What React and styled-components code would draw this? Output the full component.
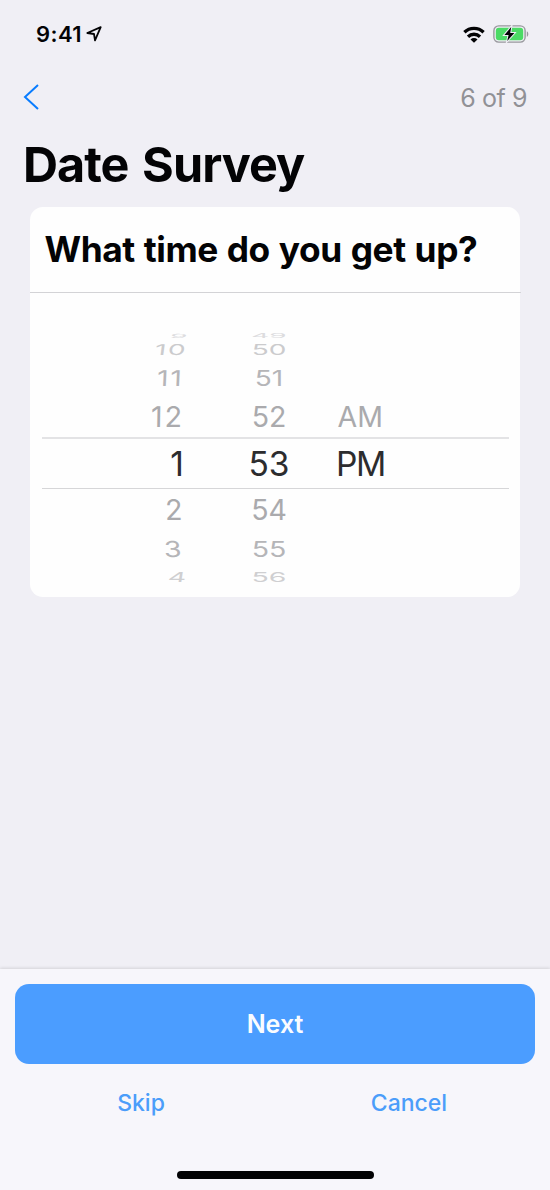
import React from 'react';
import styled, { createGlobalStyle } from 'styled-components';

const GlobalStyle = createGlobalStyle`
  * { box-sizing: border-box; }
  body { margin: 0; background: #f0eff5; }
`;

const Screen = styled.main`
  width: 550px;
  height: 1190px;
  display: flex;
  flex-direction: column;
  background: #f0eff5;
  color: #030305;
  font-family: Inter, 'Liberation Sans', sans-serif;
  overflow: hidden;
`;

const StatusBar = styled.header`
  height: 68px;
  padding: 0 21px 0 36px;
  display: flex;
  align-items: center;
  justify-content: space-between;
`;

const Clock = styled.div`
  display: flex;
  align-items: center;
  gap: 4px;
  font-size: 22px;
  font-weight: 600;
  line-height: 28px;
  letter-spacing: 0.4px;
`;

const Indicators = styled.div`
  display: flex;
  align-items: center;
  gap: 8px;
`;

const Icon = styled.svg`
  display: block;
  flex: none;
`;

const NavBar = styled.nav`
  height: 58px;
  padding: 0 23px 0 23px;
  display: flex;
  align-items: center;
  justify-content: space-between;
`;

const BackButton = styled.button`
  padding: 0;
  border: 0;
  background: none;
`;

const Progress = styled.span`
  padding-top: 2px;
  color: #919196;
  font-size: 25px;
  line-height: 30px;
  letter-spacing: -0.6px;
  word-spacing: 0.5px;
`;

const Title = styled.h1`
  margin: 9px 0 12px;
  padding-left: 23px;
  font-size: 48.5px;
  font-weight: 700;
  line-height: 60px;
  letter-spacing: -0.95px;
  word-spacing: 3px;
  white-space: nowrap;
`;

const Card = styled.section`
  width: 490px;
  height: 390px;
  margin: 0 30px;
  border-radius: 13px;
  background: #fefefe;
`;

const Question = styled.h2`
  width: 491px;
  height: 86px;
  margin: 0;
  padding-left: 14.5px;
  border-bottom: 1px solid #d3d3d6;
  font-size: 35.3px;
  font-weight: 700;
  line-height: 85px;
  letter-spacing: -0.42px;
  word-spacing: 1px;
  white-space: nowrap;
`;

const Wheel = styled.div`
  padding: 38px 11px 0 12px;
`;

const WheelRow = styled.div`
  height: ${(p) => p.$height}px;
  display: grid;
  grid-template-columns: 141px 19px 134px 1fr;
  align-items: center;
  color: ${(p) => p.$color};
  font-size: ${(p) => p.$size}px;
  line-height: 0;
  ${(p) => p.$selected && `
    border-top: 2px solid #e3e3e5;
    border-bottom: 1px solid #d6d6d8;
  `}
`;

const Cell = styled.span`
  justify-self: ${(p) => p.$align};
  white-space: nowrap;
  letter-spacing: ${(p) => p.$spacing || 0}px;
  margin-right: ${(p) => p.$inset || 0}px;
  transform: scaleY(${(p) => p.$squash}) skewX(${(p) => p.$lean || 0}deg);
`;

const Minute = styled(Cell)`
  grid-column: 3;
  width: 134px;
  text-align: center;
`;

const Period = styled(Cell)`
  grid-column: 4;
  width: 76px;
  padding-left: ${(p) => p.$indent}px;
  text-align: left;
`;

const Footer = styled.footer`
  height: 221px;
  margin-top: auto;
  padding: 15px 15px 0;
  display: flex;
  flex-direction: column;
  align-items: center;
  background: #f7f6fb;
  box-shadow: 0 -1px 3px rgba(0, 0, 0, 0.12);
`;

const NextButton = styled.button`
  width: 520px;
  height: 80px;
  border: 0;
  border-radius: 14px;
  background: #4b9dff;
  color: #fafcff;
  font-family: inherit;
  font-size: 25px;
  font-weight: 600;
  line-height: 80px;
  padding: 0;
`;

const Actions = styled.div`
  width: 536px;
  height: 78px;
  display: grid;
  grid-template-columns: 1fr 1fr;
`;

const TextButton = styled.button`
  border: 0;
  padding: 0;
  background: none;
  color: #4b9dfa;
  font-family: inherit;
  font-size: 23px;
  font-weight: 500;
  line-height: 78px;
`;

const HomeIndicator = styled.div`
  width: 197px;
  height: 8px;
  margin-top: 29px;
  border-radius: 4px;
  background: #020204;
`;

const rows = [
  { hour: '9', minute: '49', height: 9, size: 28, squash: 0.2, color: '#dcdcde', inset: -4, lean: -6 },
  { hour: '10', minute: '50', height: 19, size: 28, squash: 0.53, color: '#cbcbcd', inset: -4, lean: -4, spacing: 1.5 },
  { hour: '11', minute: '51', height: 38, size: 28, squash: 0.77, color: '#b5b5b8', inset: -1, lean: -2, spacing: 2 },
  { hour: '12', minute: '52', period: 'AM', height: 40, size: 28.5, squash: 1, color: '#aaaaad', inset: -1, lean: -1, spacing: 2 },
  { hour: '1', minute: '53', period: 'PM', height: 52, size: 33.5, squash: 1, color: '#2c2c2e', inset: -1, selected: true },
  { hour: '2', minute: '54', height: 42, size: 28.5, squash: 1, color: '#aaaaad', inset: 1, lean: 1 },
  { hour: '3', minute: '55', height: 36, size: 28.5, squash: 0.77, color: '#b5b5b8', inset: 1, lean: 2 },
  { hour: '4', minute: '56', height: 20, size: 28.5, squash: 0.48, color: '#cfcfd1', inset: -3, lean: -4 },
];

function LocationIcon() {
  return (
    <Icon width="17" height="16" viewBox="0 0 17 16" fill="none" stroke="#030305" strokeWidth="1.8" strokeLinejoin="round">
      <path d="M1.3 7 14.7 1.2 9 14.4 8 8Z" />
    </Icon>
  );
}

function WifiIcon() {
  return (
    <Icon width="22" height="17" viewBox="0 0 22 17" fill="none" stroke="#030305" strokeWidth="3.3">
      <path d="M1.4 6.3a13.8 13.8 0 0 1 19.2 0" />
      <path d="M5 10.7a8.6 8.6 0 0 1 12 0" />
      <path d="M11 16.8 7.5 13.5a5 5 0 0 1 7 0Z" fill="#030305" stroke="none" />
    </Icon>
  );
}

function BatteryIcon() {
  return (
    <Icon width="36" height="20" viewBox="0 0 36 20" fill="none">
      <rect x=".9" y="1.9" width="31.2" height="16.2" rx="4.8" stroke="#98989d" strokeWidth="1.4" />
      <path d="M33.8 7.2c2 .8 2 4.8 0 5.6Z" fill="#98989d" />
      <rect x="2.8" y="3.8" width="27.4" height="12.4" rx="3" fill="#4bdb65" />
      <path d="M18.2 3 11.4 10.9h4.2L14.2 17l7.2-8h-4.2Z" fill="#030305" stroke="#f0eff5" strokeWidth="2" paintOrder="stroke" />
    </Icon>
  );
}

export default function App() {
  return (
    <Screen>
      <GlobalStyle />
      <StatusBar>
        <Clock>9:41<LocationIcon /></Clock>
        <Indicators><WifiIcon /><BatteryIcon /></Indicators>
      </StatusBar>
      <NavBar>
        <BackButton aria-label="Back">
          <Icon width="17" height="28" viewBox="0 0 17 28" fill="none" stroke="#087cff" strokeWidth="2">
            <path d="M15 2 2 14 15 26" />
          </Icon>
        </BackButton>
        <Progress>6 of 9</Progress>
      </NavBar>
      <Title>Date Survey</Title>
      <Card>
        <Question>What time do you get up?</Question>
        <Wheel>
          {rows.map((row) => (
            <WheelRow key={row.minute} $height={row.height} $size={row.size} $color={row.color} $selected={row.selected}>
              <Cell $align="end" $inset={row.inset} $spacing={row.spacing} $squash={row.squash} $lean={row.lean}>{row.hour}</Cell>
              <Minute $align="center" $squash={row.squash}>{row.minute}</Minute>
              {row.period && (
                <Period $align="start" $squash={row.squash} $indent={row.selected ? 0 : 1.5} $spacing={row.selected ? -1.5 : 0}>
                  {row.period}
                </Period>
              )}
            </WheelRow>
          ))}
        </Wheel>
      </Card>
      <Footer>
        <NextButton>Next</NextButton>
        <Actions>
          <TextButton>Skip</TextButton>
          <TextButton>Cancel</TextButton>
        </Actions>
        <HomeIndicator />
      </Footer>
    </Screen>
  );
}
